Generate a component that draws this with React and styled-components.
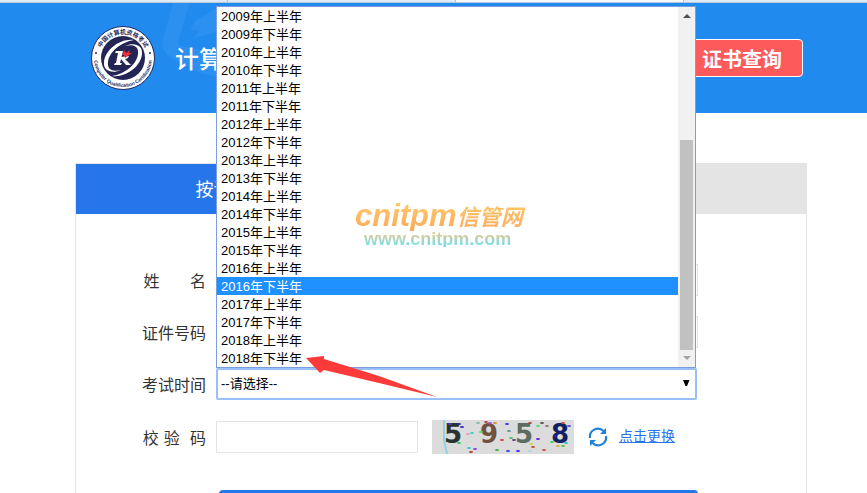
import React, { useState } from 'react';
import styled, { createGlobalStyle } from 'styled-components';

const GlobalStyle = createGlobalStyle`
  * {
    box-sizing: border-box;
  }

  body {
    margin: 0;
    background: #fff;
    color: #333;
    font-family: 'Liberation Sans', 'Noto Sans CJK SC', sans-serif;
    font-size: 16px;
  }
`;

const Page = styled.div`
  height: 100vh;
  overflow: hidden;
`;

const BrowserEdge = styled.div`
  display: flex;
  height: 3px;
  border-bottom: 1px solid #b9c6d8;
  background: #dfeafa;
`;

const BrowserTab = styled.span`
  width: 228px;
  border-right: 1px solid #b9c6d8;
  background: ${({ $current }) => ($current ? '#f6f9fd' : 'transparent')};
`;

const Header = styled.header`
  position: relative;
  display: flex;
  align-items: center;
  height: 110px;
  padding: 0 64px 0 91px;
  background: #218aee;
`;

const HeaderPattern = styled.svg`
  position: absolute;
  top: 0;
  left: 160px;
`;

const Title = styled.h1`
  position: relative;
  flex: 1;
  margin: 0;
  padding: 3px 0 0 20px;
  color: #fff;
  font-size: 24px;
  font-weight: 500;
  line-height: 36px;
  white-space: nowrap;
`;

const QueryButton = styled.button`
  height: 38px;
  padding: 3px 20px 0;
  border: 1px solid #fff;
  border-radius: 4px;
  background: #fd5a5b;
  color: #fff;
  font-family: inherit;
  font-size: 20px;
  font-weight: 700;
  line-height: 32px;
`;

const Card = styled.main`
  margin: 50px 60px 0 75px;
  border: 1px solid #e4e4e4;
`;

const Tabs = styled.div`
  display: flex;
`;

const Tab = styled.button`
  flex: 1;
  height: 50px;
  padding: 2px 0 0;
  border: 0;
  background: ${({ $active }) => ($active ? '#2675eb' : '#e4e4e4')};
  color: ${({ $active }) => ($active ? '#fff' : '#333')};
  font-family: inherit;
  font-size: 18px;
  line-height: 48px;
`;

const Form = styled.form`
  display: flex;
  flex-direction: column;
  gap: 20px;
  padding: 50px 108px 60px 50px;
`;

const Row = styled.div`
  display: flex;
  align-items: center;
  min-height: 32px;
`;

const Label = styled.label`
  width: 80px;
  margin-right: 10px;
  padding-top: 4px;
  font-family: 'DejaVu Sans', 'Noto Sans CJK SC', sans-serif;
  font-size: 16px;
  line-height: 28px;
  text-align: right;
  white-space: pre;
`;

const Input = styled.input`
  flex: ${({ $short }) => ($short ? '0 0 202px' : '1')};
  min-width: 0;
  height: 32px;
  padding: 0 8px;
  border: 1px solid #e4e4e4;
  background: #fff;
  font: inherit;
`;

const SelectBox = styled.div`
  position: relative;
  flex: 1;
  margin-right: 1px;
`;

const Select = styled.select`
  display: block;
  width: 100%;
  height: 32px;
  padding: 0 3px 2px;
  appearance: none;
  border: 2px solid #99bff8;
  border-radius: 2px;
  outline: 0;
  background: #fff;
  color: #000;
  font-family: inherit;
  font-size: 13px;
`;

const Caret = styled.svg`
  position: absolute;
  top: 12px;
  right: 7px;
  pointer-events: none;
`;

const Popup = styled.div`
  position: absolute;
  right: 1px;
  bottom: 32px;
  left: 0;
  z-index: 2;
  display: flex;
  border: 1px solid #7a9edb;
  background: #fff;
`;

const Options = styled.ul`
  flex: 1;
  margin: 0;
  padding: 0;
  list-style: none;
`;

const Option = styled.li`
  height: 18px;
  padding-left: 4px;
  background: ${({ $selected }) => ($selected ? '#1e90ff' : '#fff')};
  color: ${({ $selected }) => ($selected ? '#fff' : '#000')};
  font-size: 13px;
  line-height: 20px;
`;

const Scrollbar = styled.div`
  display: flex;
  flex-direction: column;
  align-items: center;
  width: 17px;
  background: #f1f1f1;
`;

const Thumb = styled.div`
  width: 13px;
  height: 210px;
  margin-top: auto;
  background: #c1c1c1;
`;

const Watermark = styled.div`
  position: absolute;
  top: 194px;
  left: 138px;
  display: flex;
  flex-direction: column;
  font-weight: 700;
  white-space: nowrap;
  pointer-events: none;
`;

const WatermarkName = styled.span`
  display: flex;
  align-items: center;
  height: 30px;
  padding-right: 4px;
  background: linear-gradient(#fdcb6f, #ffa858);
  background-clip: text;
  color: transparent;
  font-size: 31px;
  font-style: italic;
  line-height: 30px;

  small {
    padding-top: 3px;
    font-size: 22px;
  }
`;

const WatermarkUrl = styled.span`
  padding-left: 9px;
  background: linear-gradient(#dccb92 20%, #74e0ee 90%);
  background-clip: text;
  color: transparent;
  font-size: 18px;
  line-height: 16px;
`;

const Pointer = styled.svg`
  position: absolute;
  right: 259px;
  bottom: 2px;
  z-index: 3;
  pointer-events: none;
`;

const Captcha = styled.svg`
  flex: none;
  margin: 0 14px;
  background: #dcdcdc;
`;

const RefreshLink = styled.a`
  margin-left: 11px;
  padding-bottom: 2px;
  color: #2675eb;
  font-size: 14px;
  line-height: 20px;
  text-decoration: underline;
`;

const Submit = styled.button`
  height: 44px;
  margin: 16px 0 0 93px;
  border: 0;
  border-radius: 4px;
  background: #2478ec;
  color: #fff;
  font-family: inherit;
  font-size: 18px;
`;

const terms = [];
for (let year = 2009; year <= 2018; year += 1) {
  terms.push(`${year}年上半年`, `${year}年下半年`);
}

const specks = [
  [18, 4, '#4a2fe0'], [27, 4, '#2d27a8'], [30, 7, '#3b1fd0'], [40, 13, '#2fd7c8'], [36, 14, '#e3a0a8'],
  [46, 3, '#8fb7a0'], [54, 2, '#c4453c'], [58, 3, '#9c5be0'], [63, 3, '#e58a2b'], [49, 12, '#5bd65b'],
  [75, 4, '#3a2fe0'], [77, 11, '#4f9aa6'], [79, 18, '#4bc24b'], [82, 20, '#5a3a8c'], [98, 3, '#b8433c'],
  [110, 3, '#555'], [106, 6, '#4fe070'], [115, 6, '#a07080'], [106, 19, '#6a1fd0'], [99, 24, '#e0cf3c'],
  [101, 27, '#c05040'], [70, 20, '#c04a3c'], [65, 30, '#3fae3f'], [76, 31, '#3040e8'], [86, 31, '#3a30d8'],
  [98, 31, '#a8d8e8'], [112, 30, '#c85048'], [37, 28, '#38c8d8'], [43, 29, '#8040e0'], [39, 32, '#b04038'],
  [27, 23, '#38c050'], [120, 22, '#38d050'], [126, 26, '#d8b040'], [131, 26, '#60c040'], [134, 23, '#30c0d0'],
  [131, 3, '#d04838'], [137, 6, '#6048d0'], [123, 16, '#3020c0'],
];

function Logo() {
  return (
    <svg width="64" height="64" viewBox="0 0 64 64" role="img" aria-label="中国计算机资格考试">
      <defs>
        <path id="sealTop" d="M8 32a24 24 0 0 1 48 0" />
        <path id="sealBottom" d="M3.440 27a29 29 0 1 0 57.120 0" />
      </defs>
      <circle cx="32" cy="32" r="31.500" fill="#fff" stroke="#25295c" />
      <circle cx="32" cy="32" r="22" fill="#242554" />
      <text fill="#25295c" fontSize="6" fontWeight="700">
        <textPath href="#sealTop" startOffset="50%" textAnchor="middle">中国计算机资格考试</textPath>
      </text>
      <text fill="#25295c" fontSize="5" fontWeight="700">
        <textPath href="#sealBottom" startOffset="50%" textAnchor="middle">Computer Qualification Certification</textPath>
      </text>
      <circle cx="5" cy="27" r="1" fill="#25295c" />
      <circle cx="59" cy="27" r="1" fill="#25295c" />
      <path d="M43 14C29 12 14 24 13 36c-1 9 8 12 17 8-8 2-14 0-13-8 1-10 13-20 26-22z" fill="#fff" />
      <path d="M21 50c14 2 29-10 30-22 1-9-8-12-17-8 8-2 14 0 13 8-1 10-13 20-26 22z" fill="#fff" />
      <path d="M25 25h7l-3 12h2l-1 2h-7l1-2h1l2-10h-3z" fill="#fff" />
      <path d="M30 31l8-1c-1 2-2 3-4 3l6 6h-5l-5-6z" fill="#fff" />
      <path d="M31 29l2-5 2 3 4-3-1 3 3 0-7 5-1-3z" fill="#ed2e38" />
    </svg>
  );
}

function RefreshIcon() {
  return (
    <svg width="20" height="20" viewBox="0 0 20 20" aria-hidden="true">
      <g fill="none" stroke="#2180d8" strokeWidth="2.200">
        <path d="M2 11A8 8 0 0 1 15.500 4" />
        <path d="M18 9A8 8 0 0 1 4.500 16" />
      </g>
      <path d="M18 1v6h-6zM2 19v-6h6z" fill="#2180d8" />
    </svg>
  );
}

function TermPopup({ selected, onSelect }) {
  return (
    <Popup>
      <Options role="listbox" aria-label="考试时间">
        {terms.map((term) => (
          <Option
            key={term}
            role="option"
            aria-selected={term === selected}
            $selected={term === selected}
            onClick={() => onSelect(term)}
          >
            {term}
          </Option>
        ))}
      </Options>
      <Scrollbar aria-hidden="true">
        <svg width="17" height="17"><path d="M5 11l4-4 4 4z" fill="#505050" /></svg>
        <Thumb />
        <svg width="17" height="17"><path d="M5 6h8l-4 4z" fill="#a3a3a3" /></svg>
      </Scrollbar>
      <Watermark aria-hidden="true">
        <WatermarkName>cnitpm<small>信管网</small></WatermarkName>
        <WatermarkUrl>www.cnitpm.com</WatermarkUrl>
      </Watermark>
    </Popup>
  );
}

export default function App() {
  const [highlighted, setHighlighted] = useState('2016年下半年');

  return (
    <Page>
      <GlobalStyle />
      <BrowserEdge>
        <BrowserTab />
        <BrowserTab />
        <BrowserTab $current />
      </BrowserEdge>
      <Header>
        <HeaderPattern width="120" height="80" viewBox="0 0 120 80" aria-hidden="true">
          <path d="M13 0L3 36c-2 9 2 16 10 20l27 14 20 4V50L24 44c-5-1-7-4-5-9L30 0z" fill="#2b90f0" />
          <path d="M60 4L36 17l-6 10h10l-6 8 26-7z" fill="#2b90f0" />
        </HeaderPattern>
        <Logo />
        <Title>计算机技术与软件专业技术资格（水平）考试</Title>
        <QueryButton type="button">证书查询</QueryButton>
      </Header>

      <Card>
        <Tabs>
          <Tab type="button" $active>按证件号码查询</Tab>
          <Tab type="button">按证书编号查询</Tab>
        </Tabs>
        <Form>
          <Row>
            <Label htmlFor="name">{'姓\u00a0\u00a0\u00a0\u00a0\u00a0\u00a0名'}</Label>
            <Input id="name" />
          </Row>
          <Row>
            <Label htmlFor="idNumber">证件号码</Label>
            <Input id="idNumber" />
          </Row>
          <Row>
            <Label htmlFor="term">考试时间</Label>
            <SelectBox>
              <Select id="term">
                <option>--请选择--</option>
                {terms.map((term) => <option key={term}>{term}</option>)}
              </Select>
              <Caret width="8" height="7"><path d="M1 0h6.500L5 6H3.500z" fill="#000" /></Caret>
              <TermPopup selected={highlighted} onSelect={setHighlighted} />
              <Pointer width="132" height="42" viewBox="0 0 132 42" aria-hidden="true">
                <path d="M0 2L18 0v3l55 17 58 21-58-14-55-13-4 3z" fill="#fd3a3a" />
              </Pointer>
            </SelectBox>
          </Row>
          <Row>
            <Label htmlFor="captcha">{'校\u00a0验\u00a0\u00a0码'}</Label>
            <Input id="captcha" $short />
            <Captcha width="142" height="34" viewBox="0 0 142 34" role="img" aria-label="5958">
              <path d="M12 0v20l3 14" fill="none" stroke="#8fd3e4" strokeWidth="2" />
              <g fontFamily="DejaVu Sans" fontSize="26" fontWeight="700">
                <text x="12" y="23" fill="#26332f">5</text>
                <text x="48" y="23" fill="#70523f">9</text>
                <text x="83" y="23" fill="#5c6c60">5</text>
                <text x="119" y="23" fill="#102060">8</text>
              </g>
              {specks.map(([x, y, fill]) => (
                <ellipse key={`${x}-${y}`} cx={x} cy={y} rx="2" ry="1" fill={fill} />
              ))}
            </Captcha>
            <RefreshIcon />
            <RefreshLink href="#captcha">点击更换</RefreshLink>
          </Row>
          <Submit type="submit">查询</Submit>
        </Form>
      </Card>
    </Page>
  );
}
